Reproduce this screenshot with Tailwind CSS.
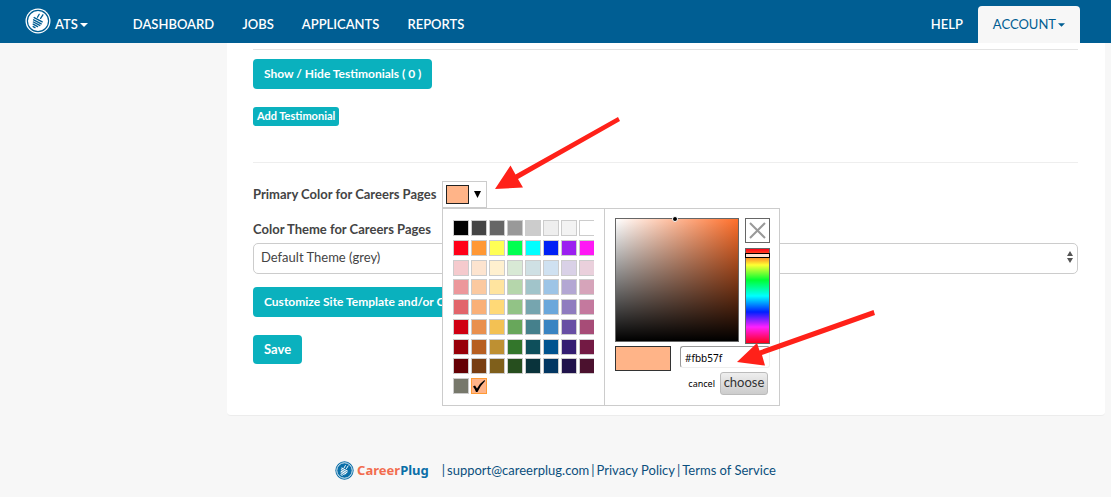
<!DOCTYPE html>
<html lang="en">
<head>
<meta charset="utf-8">
<title>CareerPlug ATS</title>
<script src="https://cdn.jsdelivr.net/npm/@tailwindcss/browser@4"></script>
</head>
<body class="relative min-h-screen overflow-x-hidden bg-[#f7f7f7] font-['Lato',sans-serif] text-[13px] text-[#444]">
<svg class="hidden" aria-hidden="true">
  <symbol id="plug" viewBox="0 0 26 26">
    <circle cx="13" cy="13" r="12.5" fill="var(--edge)"/>
    <circle cx="13" cy="13" r="10.6" fill="none" stroke="var(--ring)" stroke-width="1.2"/>
    <g fill="none" stroke="var(--plug)" stroke-linecap="round">
      <path stroke-width="1.3" d="M12.5 9.3 14.2 6.2M15.6 10.4 17.9 6.8"/>
      <path stroke-width="1.4" d="M9.2 9.6 17.2 13.8M8.6 11.8 16.2 15.8M8.4 14 14.8 17.4M8.2 16.2 12.6 18.6M8.2 18.6 10 19.6"/>
    </g>
  </symbol>
</svg>

<header class="flex h-[43px] items-stretch bg-[#005e93] pl-[25px] pr-[31px] font-semibold text-white">
  <a href="#" class="flex items-center gap-1 pt-1.5" aria-label="ATS">
    <svg class="-mt-2 size-[26px] [--edge:#fff] [--plug:#005e93] [--ring:#005e93]"><use href="#plug"/></svg>
    <span>ATS</span>
    <svg class="-ml-0.5 h-1 w-2" viewBox="0 0 8 4"><path d="M0 0h8L4 4z" fill="#fff"/></svg>
  </a>
  <nav class="ml-[45px] flex items-center gap-7 pt-1.5">
    <a href="#">DASHBOARD</a>
    <a href="#">JOBS</a>
    <a href="#">APPLICANTS</a>
    <a href="#">REPORTS</a>
  </nav>
  <nav class="ml-auto flex items-stretch gap-[15px]">
    <a href="#" class="flex items-center pt-1.5">HELP</a>
    <a href="#" class="mt-1.5 flex items-center rounded-t bg-[#f7f7f7] px-[15px] font-normal text-[#005e93]">ACCOUNT
      <svg class="ml-0.5 h-1 w-[7px]" viewBox="0 0 8 4"><path d="M0 0h8L4 4z" fill="#005e93"/></svg>
    </a>
  </nav>
</header>

<main class="ml-[227px] mr-1.5 rounded-b border-b border-[#ececec] bg-white pb-[51px] pl-[26px] pr-[27px] pt-1.5">
  <hr class="border-[#e3e3e3]">
  <button class="mt-[9px] block h-[30px] rounded bg-[#0ab1be] px-[11px] text-xs font-bold text-white">Show / Hide Testimonials ( 0 )</button>
  <button class="mt-[18px] block h-[19px] rounded-[3px] bg-[#0ab1be] px-1 text-[11px] font-bold text-white">Add Testimonial</button>
  <hr class="mt-9 border-[#eee]">

  <div class="mt-[18px] flex h-[27px] items-center">
    <span class="w-[189px] font-bold" id="primary">Primary Color for Careers Pages</span>
    <div class="relative">
      <button class="flex h-[27px] w-[45px] items-center gap-[5px] border border-[#ccc] bg-white pl-[3px]" aria-labelledby="primary">
        <span class="h-[19px] w-[23px] border border-[#222] bg-[#ffb488]"></span>
        <svg class="h-[7px] w-[7px]" viewBox="0 0 7 7"><path d="M0 0h7L3.500 7z" fill="#000"/></svg>
      </button>

      <section class="absolute left-0 top-[27px] z-10 flex h-[198px] w-[338px] border border-[#ccc] bg-white" aria-label="Color picker">
        <div class="w-[162px] shrink-0 border-r border-[#ccc] pl-2.5 pt-[11px]">
          <div id="palette" class="grid h-[174px] w-[141px] grid-cols-[repeat(8,16px)] content-between gap-x-0.5 overflow-hidden"></div>
        </div>
        <div class="grow pl-2.5 pr-[9px] pt-[9px] text-black">
          <div class="flex justify-between">
            <div class="relative size-[124px] border border-[#666] bg-[linear-gradient(to_top,#000,transparent),linear-gradient(to_right,#fff,#ff6f2a)]">
              <span class="absolute -top-[3px] left-[56px] size-[6px] rounded-full border border-white bg-black"></span>
            </div>
            <div class="flex w-[25px] flex-col gap-[5px]">
              <button class="flex h-[25px] items-center justify-center border border-[#666]" aria-label="Clear color">
                <svg class="size-[17px]" viewBox="0 0 17 17"><path d="M1 1 16 16M16 1 1 16" stroke="#999" stroke-width="2"/></svg>
              </button>
              <div class="relative h-[96px] border border-[#666] bg-[linear-gradient(to_bottom,#ff0018_0%,#ffff33_17%,#00ff33_33%,#00ffff_50%,#0020ff_67%,#ff20ff_83%,#ff0018_100%)]">
                <span class="absolute -left-px top-1 h-[5px] w-[25px] border border-black bg-[#ffe0cf]"></span>
              </div>
            </div>
          </div>
          <div class="mt-0.5 flex items-start justify-between">
            <span class="h-[25px] w-[56px] border border-[#333] bg-[#ffb488]"></span>
            <input aria-label="Hex color" value="#fbb57f" class="h-[22px] w-[90px] rounded-[3px] border border-b-[#eee] border-l-[#999] border-r-[#eee] border-t-[#999] px-1 pt-0.5 font-['Noto_Sans',sans-serif] text-[10px] text-black">
          </div>
          <div class="mt-px flex items-center justify-end gap-[5px] pr-0.5">
            <a href="#" class="font-['Noto_Sans',sans-serif] text-[9px]">cancel</a>
            <button class="h-[23px] w-[48px] rounded-[3px] border border-[#bbb] bg-linear-to-b from-[#eee] to-[#ccc] pb-0.5 text-[#333]">choose</button>
          </div>
        </div>
      </section>
    </div>
  </div>

  <label for="theme" class="mt-3 block h-[23px] leading-[18px] font-bold">Color Theme for Careers Pages</label>
  <div class="relative">
    <select id="theme" class="block h-[31px] w-full appearance-none rounded-[5px] border border-[#ccc] bg-white px-[7px] pb-0.5 text-[#444]">
      <option>Default Theme (grey)</option>
    </select>
    <svg class="pointer-events-none absolute right-[5px] top-2 h-3 w-[6px]" viewBox="0 0 6 12"><path d="M0 5h6L3 0zM0 7h6L3 12z" fill="#555"/></svg>
  </div>
  <button class="mt-[13px] block h-[30px] rounded bg-[#0ab1be] px-[11px] text-xs font-bold text-white">Customize Site Template and/or CSS</button>
  <button class="mt-[18px] block h-[29px] rounded bg-[#0ab1be] px-[11px] font-bold text-white">Save</button>
</main>

<footer class="mt-[45px] flex items-center justify-center pb-3 text-[#0b4f7d]">
  <a href="#" class="flex items-center gap-[3px] font-['Noto_Sans',sans-serif] font-bold text-[#0b6fa8]">
    <svg class="size-[19px] [--edge:#0b6fa8] [--plug:#fff] [--ring:#fff]"><use href="#plug"/></svg>
    <span><span class="text-[#f26d4f]">Career</span>Plug</span>
  </a>
  <p class="ml-[13px] flex gap-0.5 whitespace-nowrap"><span>|</span><a href="#">support@careerplug.com</a><span>|</span><a href="#">Privacy Policy</a><span>|</span><a href="#">Terms of Service</a></p>
</footer>

<svg class="pointer-events-none absolute left-0 top-0 z-20 h-[497px] w-[1111px]" viewBox="0 0 1111 497" fill="#ff2119" aria-hidden="true">
  <path d="M495 189 510.500 165.500 515.500 174.500 618 117 620 121 518 179 523 187.500z"/>
  <path d="M737 362 757 343 759.500 350.500 873.500 310 875 315 762 355 765 365.500z"/>
</svg>

<script>
const rows = [
  ['#000000','#444444','#666666','#999999','#cccccc','#eeeeee','#f3f3f3','#ffffff'],
  ['#ff0018','#ff9835','#ffff55','#00ff50','#00ffff','#0020f5','#9b20f0','#ff18f5'],
  ['#f5cacd','#fde4cf','#fff0cf','#d8e9d5','#cfe0e4','#cfe1f1','#d9d1e7','#ead0dc'],
  ['#ec979b','#fbc9a0','#ffe49f','#b5d6ab','#a1c4ca','#9dc4e6','#b3a7d3','#d6a4ba'],
  ['#e2656b','#f9b078','#ffd977','#92c386','#76a5af','#6ba7db','#8f7cbf','#c4799e'],
  ['#d00012','#e9904e','#f3c153','#68a75b','#45808c','#3a84c2','#684fa4','#a74c77'],
  ['#980009','#b75f21','#be9032','#33762b','#0e4f5b','#00538f','#341e72','#731a44'],
  ['#650004','#783e13','#7f5f1b','#264e1e','#09333b','#023662','#20134b','#4b112e'],
  ['#77786b']
];
const palette = document.getElementById('palette');
for (const color of rows.flat()) {
  const b = document.createElement('button');
  b.className = 'size-4 border border-[#ccc]';
  b.style.backgroundColor = color;
  b.setAttribute('aria-label', color);
  palette.append(b);
}
const selected = document.createElement('button');
selected.className = 'size-4 border border-[#ff9b35] bg-[#ffb488]';
selected.setAttribute('aria-label', '#fbb57f selected');
selected.innerHTML = '<svg class="size-[14px]" viewBox="0 0 14 14"><path d="M1 7.500 3 6.500 5 9.500Q8 4 12.500 1L13 2Q8 7 5.500 13H4Q3 10 1 7.500z" fill="#000"/></svg>';
palette.append(selected);
</script>
</body>
</html>
